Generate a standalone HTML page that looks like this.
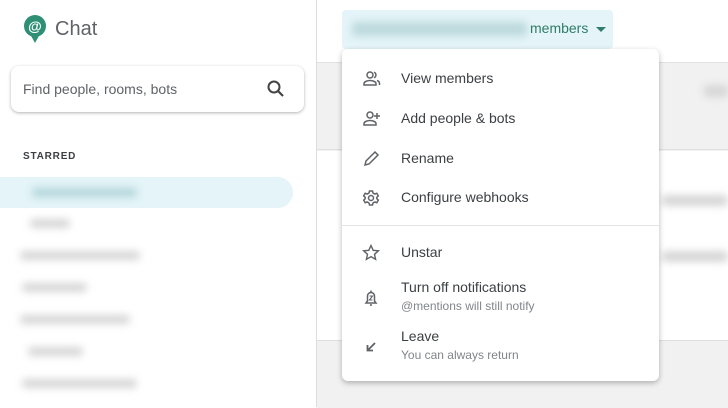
<!DOCTYPE html>
<html><head><style>
body{margin:0;width:728px;height:407px;overflow:hidden;font-family:"Liberation Sans",sans-serif;background:#fff;position:relative}
.abs{position:absolute}
.blur{position:absolute;filter:blur(4px);background:#d6d6d6;height:9px;border-radius:4px}
.item{position:absolute;left:401px;font-size:14px;color:#3c4043}
.sub{font-size:12px;color:#80868b}
.ic{position:absolute;left:362px}
</style></head><body>
<!-- sidebar -->
<svg class="abs" style="left:22px;top:14px" width="26" height="30" viewBox="0 0 26 30"><circle cx="13" cy="12" r="11" fill="#2f8f74"/><path d="M8 20 L13 29 L18 20Z" fill="#2f8f74"/><text x="13" y="17" text-anchor="middle" font-family="Liberation Sans" font-size="14" font-weight="bold" fill="#fff">@</text></svg>
<div class="abs" style="left:55px;top:18px;font-size:20px;color:#5f6368">Chat</div>
<div class="abs" style="left:11px;top:66px;width:293px;height:46px;border-radius:8px;box-shadow:0 1px 3px rgba(0,0,0,.3);background:#fff"></div>
<div class="abs" style="left:23px;top:81px;font-size:14px;color:#5f6368">Find people, rooms, bots</div>
<svg class="abs" style="left:266px;top:79px" width="20" height="20" viewBox="0 0 20 20"><circle cx="8" cy="8" r="5.5" fill="none" stroke="#444" stroke-width="2"/><path d="M12 12 L17 17" stroke="#444" stroke-width="2.2"/></svg>
<div class="abs" style="left:23px;top:151px;font-size:10px;font-weight:bold;letter-spacing:.8px;color:#3c4043">STARRED</div>
<div class="abs" style="left:0;top:177px;width:293px;height:31px;border-radius:0 16px 16px 0;background:#e4f4f8"></div>
<div class="blur" style="left:32px;top:188px;width:105px;background:#b3d6da"></div>
<div class="blur" style="left:30px;top:219px;width:40px"></div>
<div class="blur" style="left:20px;top:251px;width:120px"></div>
<div class="blur" style="left:22px;top:283px;width:65px"></div>
<div class="blur" style="left:20px;top:315px;width:110px"></div>
<div class="blur" style="left:28px;top:347px;width:55px"></div>
<div class="blur" style="left:22px;top:379px;width:115px"></div>
<div class="abs" style="left:316px;top:0;width:1px;height:407px;background:#ddd"></div>
<!-- right -->
<div class="abs" style="left:317px;top:62px;width:411px;height:88px;background:#f1f1f1;border-top:1px solid #e2e2e2"></div>
<div class="abs" style="left:317px;top:149px;width:411px;height:1px;background:#e0e0e0"></div>
<div class="abs" style="left:317px;top:340px;width:411px;height:67px;background:#f1f1f1;border-top:1px solid #e0e0e0"></div>
<div class="blur" style="left:704px;top:85px;width:24px;height:12px"></div>
<div class="blur" style="left:662px;top:195px;width:66px;height:11px"></div>
<div class="blur" style="left:662px;top:251px;width:66px;height:11px"></div>
<div class="abs" style="left:342px;top:10px;width:271px;height:39px;border-radius:4px;background:#e4f4f8"></div>
<div class="blur" style="left:352px;top:22px;width:175px;height:14px;background:#bcd9dc"></div>
<div class="abs" style="left:530px;top:20px;font-size:14px;color:#2f7d6a">members</div>
<svg class="abs" style="left:596px;top:27px" width="10" height="6"><path d="M0 0 L10 0 L5 5Z" fill="#2f7d6a"/></svg>
<!-- menu -->
<div class="abs" style="left:342px;top:49px;width:317px;height:332px;background:#fff;border-radius:6px;box-shadow:0 2px 6px rgba(0,0,0,.28)"></div>
<div class="abs" style="left:342px;top:225px;width:317px;height:1px;background:#e3e3e3"></div>
<div class="item" style="top:70px">View members</div>
<div class="item" style="top:110px">Add people &amp; bots</div>
<div class="item" style="top:150px">Rename</div>
<div class="item" style="top:189px">Configure webhooks</div>
<div class="item" style="top:244px">Unstar</div>
<div class="item" style="top:279px">Turn off notifications<div class="sub" style="margin-top:4px">@mentions will still notify</div></div>
<div class="item" style="top:328px">Leave<div class="sub" style="margin-top:4px">You can always return</div></div>
<svg class="ic" style="top:70px" width="20" height="18" viewBox="0 0 20 18" fill="none" stroke="#5f6368" stroke-width="1.5"><circle cx="8" cy="5" r="3"/><path d="M2 15 v-1.5 c0-2 4-3 6-3 s6 1 6 3 V15 Z"/><path d="M12 2.2 a3 3 0 0 1 0 5.6 M15 10.5 c1.5.5 2.5 1.5 2.5 3 V15"/></svg>
<svg class="ic" style="top:110px" width="20" height="18" viewBox="0 0 20 18" fill="none" stroke="#5f6368" stroke-width="1.5"><circle cx="8" cy="5" r="3"/><path d="M2 15 v-1.5 c0-2 4-3 6-3 s6 1 6 3 V15 Z"/><path d="M15 3 v6 M12 6 h6"/></svg>
<svg class="ic" style="top:149px" width="20" height="18" viewBox="0 0 20 18" fill="none" stroke="#5f6368" stroke-width="1.5"><path d="M3 16 L4 12 L13 3 L16 6 L7 15 Z"/></svg>
<svg class="ic" style="top:189px" width="20" height="18" viewBox="0 0 20 18" fill="none" stroke="#5f6368" stroke-width="1.5"><circle cx="9" cy="9" r="2.5"/><path d="M7.5 2 h3 l.5 2 1.8 1 2-.7 1.5 2.6 -1.5 1.4 v1.4 l1.5 1.4 -1.5 2.6 -2-.7 -1.8 1 -.5 2 h-3 l-.5-2 -1.8-1 -2 .7 -1.5-2.6 1.5-1.4 v-1.4 l-1.5-1.4 1.5-2.6 2 .7 1.8-1z"/></svg>
<svg class="ic" style="top:244px" width="20" height="18" viewBox="0 0 20 18" fill="none" stroke="#5f6368" stroke-width="1.4"><path d="M9 1.5 l2.2 4.8 5.2.5 -3.9 3.5 1.1 5.1 -4.6-2.7 -4.6 2.7 1.1-5.1 -3.9-3.5 5.2-.5z"/></svg>
<svg class="ic" style="top:288px" width="20" height="20" viewBox="0 0 20 20" fill="none" stroke="#5f6368" stroke-width="1.5"><path d="M4 15 h10 l-1.5-2 V8 a3.5 3.5 0 0 0 -7 0 v5 Z M8 17 h2 M9 2.5 v1.5"/><path d="M7.5 8 h3 l-3 4 h3" stroke-width="1.1"/></svg>
<svg class="ic" style="top:338px" width="20" height="18" viewBox="0 0 20 18" fill="none" stroke="#5f6368" stroke-width="1.8"><path d="M13 5 L6 12 M5.5 7 v5.5 h5.5"/></svg>
</body></html>
